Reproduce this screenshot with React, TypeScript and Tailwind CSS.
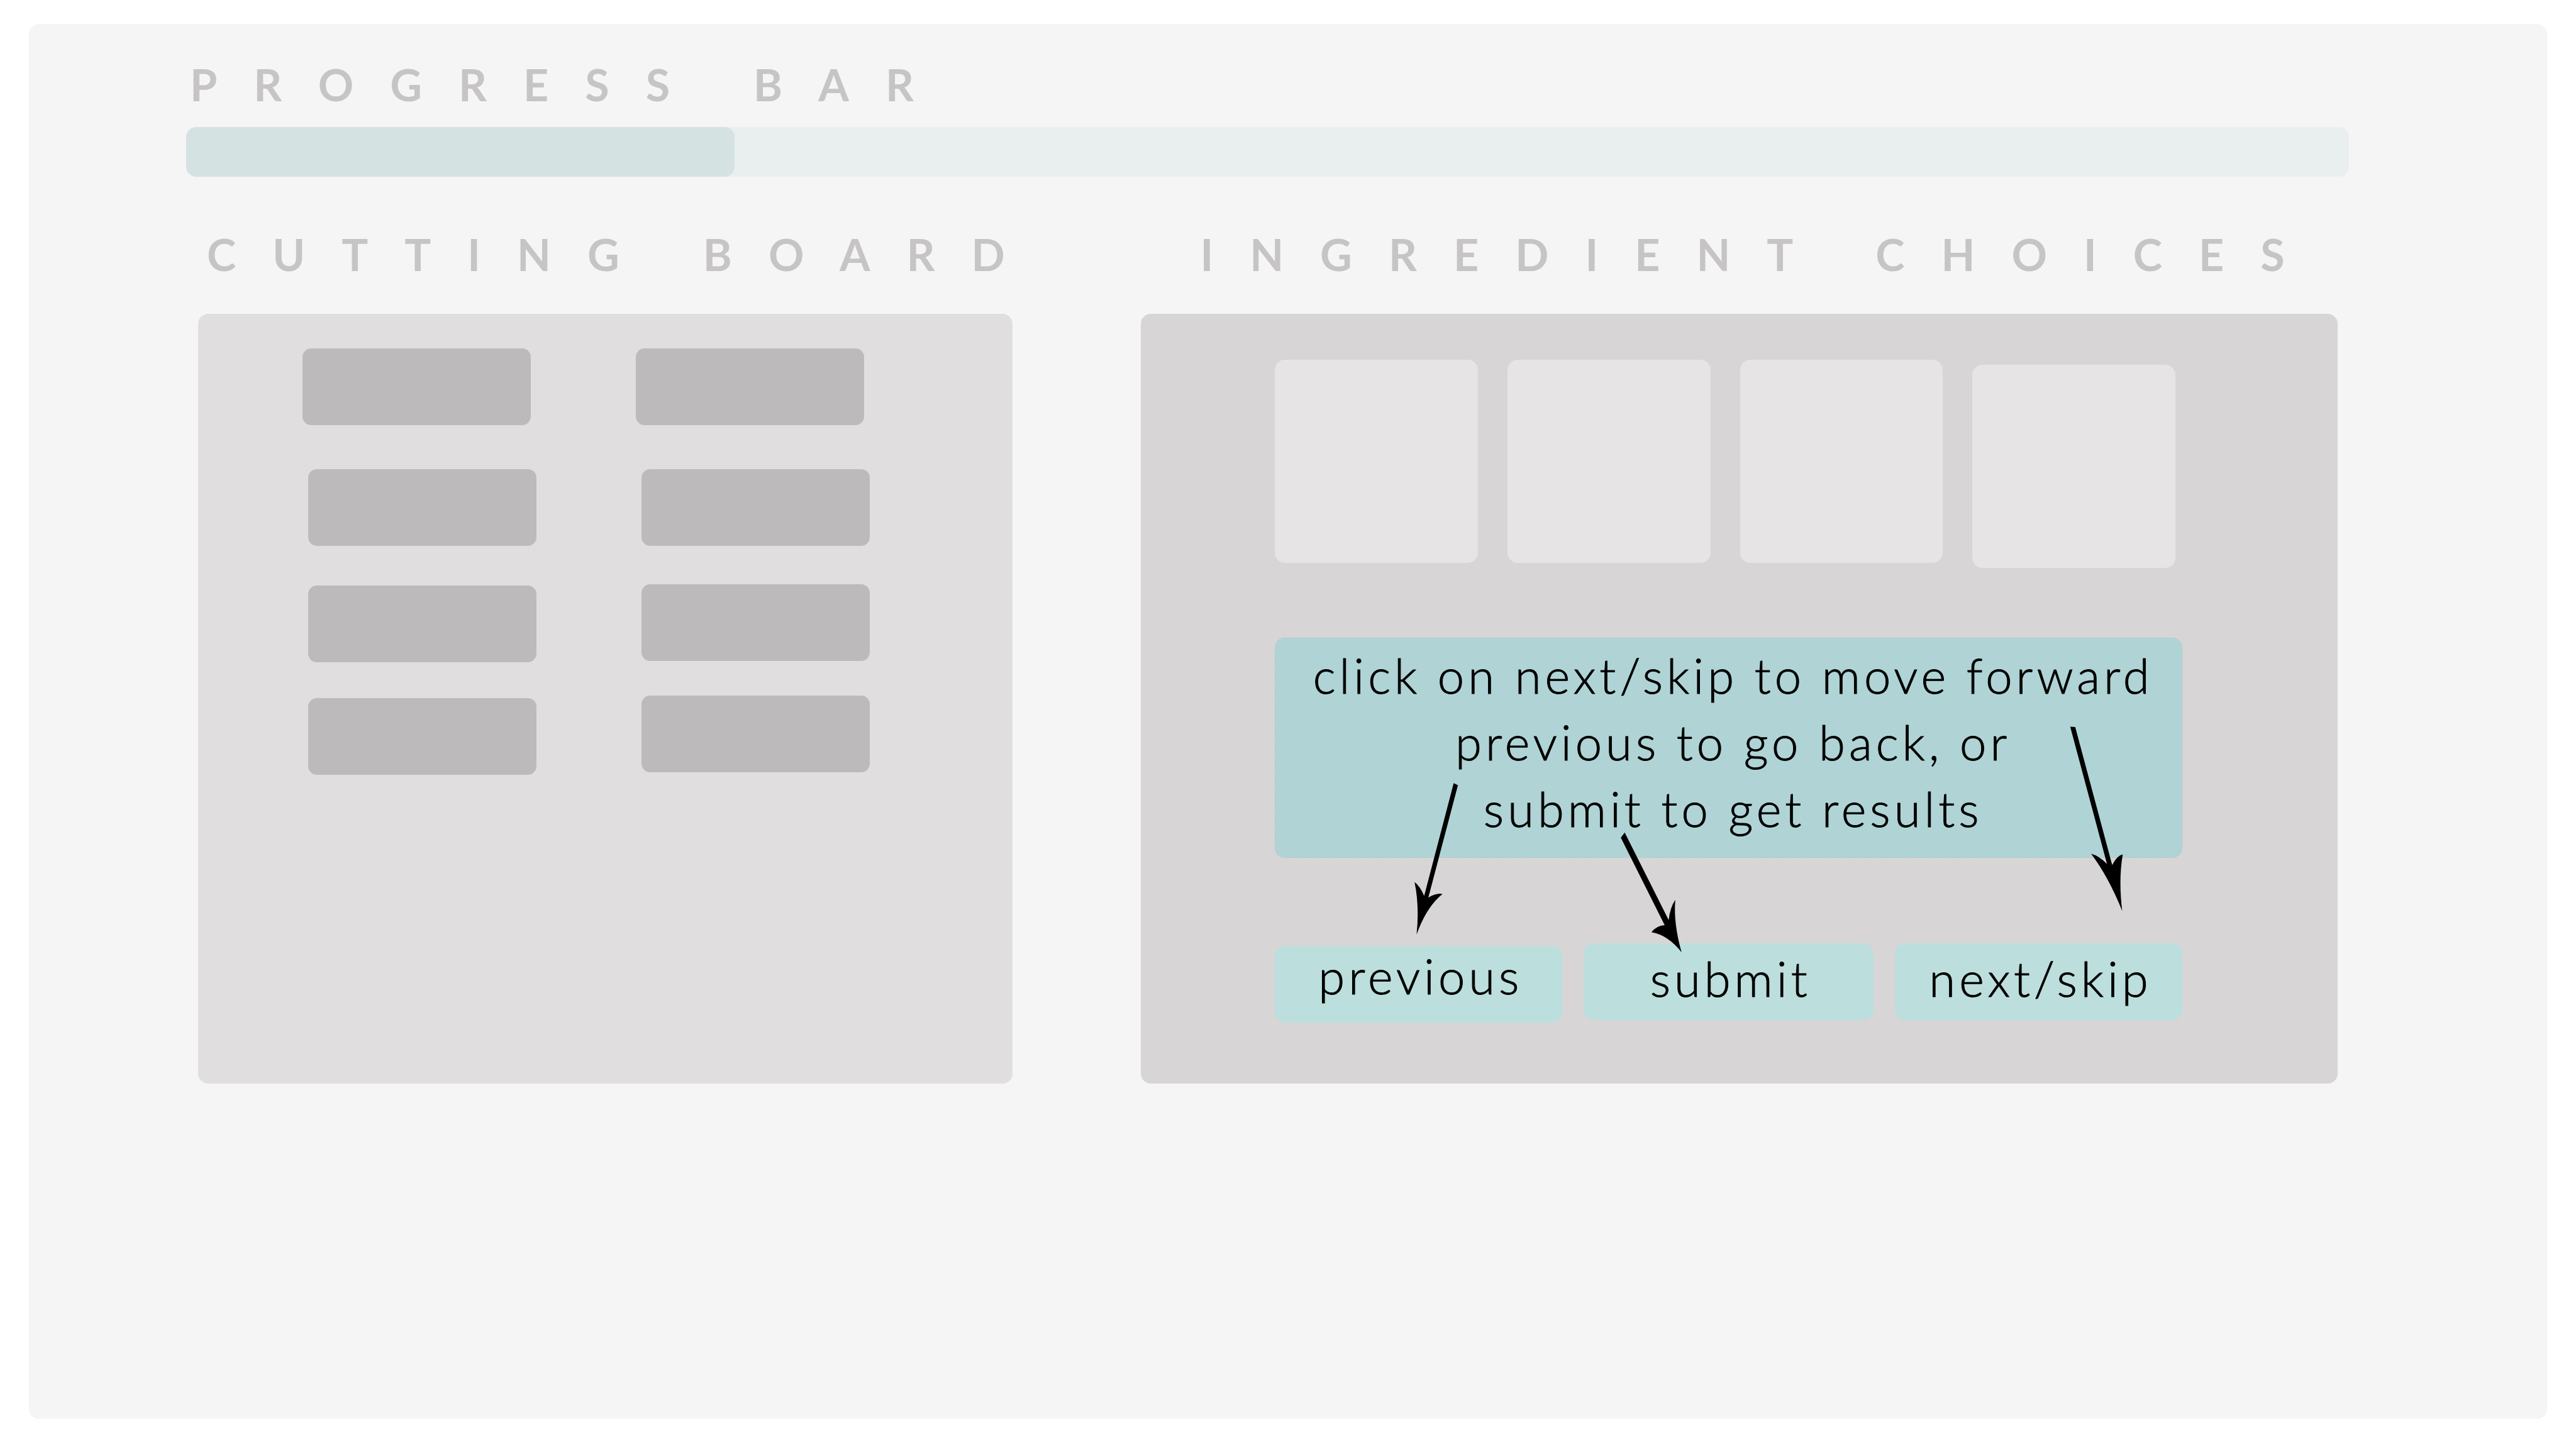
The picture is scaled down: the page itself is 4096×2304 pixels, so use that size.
import React from "react";

const heading =
  "whitespace-nowrap text-[70px] leading-[80px] font-bold uppercase tracking-[58px] text-[#c6c4c5]";
const chip = "h-[122px] w-[363px] rounded-[14px] bg-[#bcbabb]";
const tile = "aspect-square w-full rounded-[16px] bg-[#e6e4e5]";
const copy =
  "text-center text-[76px] font-light tracking-[6px] text-black [-webkit-text-stroke:1px_#000]";
const action = `${copy} h-[122px] rounded-[16px] bg-[#bcdfdd] pl-[6px] leading-[90px]`;

/* Hand-placed pointers running from the hint text to the three buttons. */
function Pointers() {
  return (
    <svg
      className="pointer-events-none absolute inset-0 h-full w-full overflow-visible"
      viewBox="0 0 1443 611"
      fill="#000"
      aria-hidden="true"
    >
      <path d="M284.5 230.8L291.3 233.9L244.2 412.7Q256 405 266.8 407.1Q241.2 427.6 225.5 471.6Q230.3 426.9 222.3 388Q231.2 394.7 237.6 410Z" />
      <path d="M556.5 309.2L550.4 317.4L620.1 456.6Q607.1 457.5 599.1 467.8Q625.1 472.1 647 499.8Q633.8 453.4 637 416.3Q628.5 429.1 626.5 448.6Z" />
      <path d="M1265.1 141L1273.1 141.5L1331.9 361Q1339.6 346 1348.7 344.1Q1341.7 383.8 1347.8 434.1Q1325.9 379.6 1298.3 343.1Q1310.3 346 1323.6 359.3Z" />
    </svg>
  );
}

function CuttingBoard() {
  return (
    <section className="flex flex-col" aria-labelledby="board-title">
      <h2 id="board-title" className={`${heading} pl-[14px]`}>
        Cutting Board
      </h2>
      <div className="mt-[55px] flex flex-1 items-start gap-[158px] rounded-[16px] bg-[#e0dedf] pt-[55px] pl-[166px]">
        <div className="flex w-[372px] flex-col items-end">
          <div className={`${chip} self-start`} />
          <div className={`${chip} mt-[70px]`} />
          <div className={`${chip} mt-[63px]`} />
          <div className={`${chip} mt-[57px]`} />
        </div>
        <div className="flex w-[372px] flex-col items-end">
          <div className={`${chip} self-start`} />
          <div className={`${chip} mt-[70px]`} />
          <div className={`${chip} mt-[61px]`} />
          <div className={`${chip} mt-[55px]`} />
        </div>
      </div>
    </section>
  );
}

function IngredientChoices() {
  return (
    <section className="flex flex-col" aria-labelledby="choices-title">
      <h2 id="choices-title" className={`${heading} pl-[94px]`}>
        Ingredient Choices
      </h2>
      <div className="mt-[55px] flex-1 rounded-[16px] bg-[#d7d5d6] pt-[73px] pr-[247px] pb-[97px] pl-[213px]">
        <div className="grid h-[331px] grid-cols-4 items-start gap-[47px] pr-[11px]">
          <div className={tile} />
          <div className={tile} />
          <div className={tile} />
          <div className={`${tile} self-end`} />
        </div>
        <div className="relative mt-[111px]">
          <p
            className={`${copy} rounded-[16px] border border-dashed border-[#b3b3b3]/50 bg-[#b0d4d6] pt-[6px] pb-[24px] pl-[14px] leading-[106px]`}
          >
            click on next/skip to move forward
            <br />
            previous to go back, or
            <br />
            submit to get results
          </p>
          <div className="mt-[136px] grid h-[126px] grid-cols-[457fr_461fr_457fr] gap-x-[34px]">
            <button type="button" className={`${action} self-end pb-[26px]`}>
              previous
            </button>
            <button type="button" className={`${action} pb-[10px]`}>
              submit
            </button>
            <button type="button" className={`${action} pb-[10px]`}>
              next/skip
            </button>
          </div>
          <Pointers />
        </div>
      </div>
    </section>
  );
}

export default function App() {
  const progress = 25.35;
  return (
    <div className="flex min-h-screen bg-white px-[46px] pt-[38px] pb-[48px] font-['Lato',sans-serif]">
      <main className="flex-1 rounded-[16px] bg-[#f5f5f5] pt-[56px]">
        <section className="pr-[315px] pl-[250px]">
          <h1 id="progress-title" className={`${heading} pl-[6px]`}>
            Progress Bar
          </h1>
          <div
            role="progressbar"
            aria-labelledby="progress-title"
            aria-valuenow={progress}
            aria-valuemin={0}
            aria-valuemax={100}
            className="mt-[28px] h-[79px] rounded-[16px] bg-[#e9eeee]"
          >
            <div
              className="h-full rounded-[16px] bg-[#d4e2e2]"
              style={{ width: `${progress}%` }}
            />
          </div>
        </section>
        <div className="mt-[83px] grid grid-cols-[minmax(0,1295fr)_minmax(0,1902fr)] gap-[204px] pr-[333px] pl-[269px]">
          <CuttingBoard />
          <IngredientChoices />
        </div>
      </main>
    </div>
  );
}
